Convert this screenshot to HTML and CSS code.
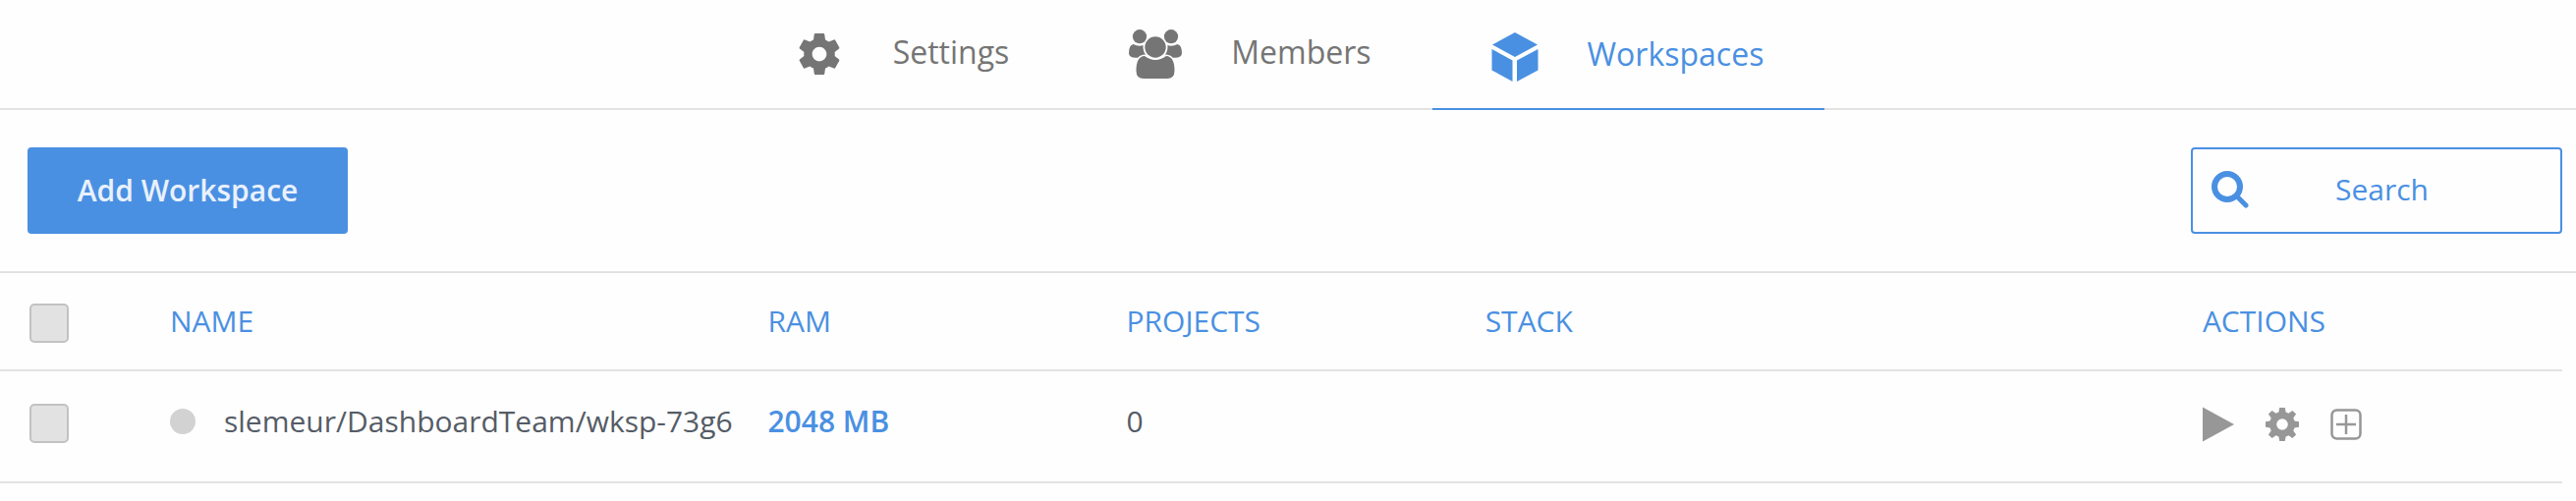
FILE: index.html
```html
<!DOCTYPE html>
<html lang="en">
<head>
<meta charset="utf-8">
<title>Workspaces</title>
<link rel="stylesheet" href="styles.css">
</head>
<body>
<nav class="tabs">
  <a class="tab" href="#settings">
    <svg class="tab-icon icon-gear" viewBox="2 2 20 20" aria-hidden="true"><path d="M19.430 12.980c.04-.32.07-.64.07-.98s-.03-.66-.07-.98l2.110-1.650c.19-.15.24-.42.12-.64l-2-3.460c-.12-.22-.39-.3-.61-.22l-2.490 1c-.52-.4-1.080-.73-1.690-.98l-.38-2.650C14.460 2.180 14.250 2 14 2h-4c-.25 0-.46.18-.49.42l-.38 2.650c-.61.25-1.170.59-1.690.98l-2.490-1c-.23-.09-.49 0-.61.22l-2 3.460c-.13.22-.07.49.12.64l2.110 1.650c-.04.32-.07.65-.07.98s.03.66.07.98l-2.110 1.650c-.19.15-.24.42-.12.64l2 3.460c.12.22.39.3.61.22l2.490-1c.52.4 1.080.73 1.690.98l.38 2.650c.03.24.24.42.49.42h4c.25 0 .46-.18.49-.42l.38-2.650c.61-.25 1.170-.59 1.690-.98l2.490 1c.23.09.49 0 .61-.22l2-3.460c.12-.22.07-.49-.12-.64l-2.110-1.650zM12 15.500c-1.930 0-3.500-1.570-3.500-3.500s1.570-3.500 3.500-3.500 3.500 1.570 3.500 3.500-1.570 3.500-3.500 3.500z"/></svg>
    <span>Settings</span>
  </a>
  <a class="tab" href="#members">
    <svg class="tab-icon icon-members" viewBox="0 0 54 50" aria-hidden="true"><path d="M4.500 15q6.500 3.500 13 0V28.800H7Q0 28.800 0 24q0-8 4.500-9zM49.500 15q-6.500 3.500-13 0V28.800H47q7 0 7-4.800q0-8-4.500-9z"/><path class="cutout" d="M16 27q11 8 22 0Q46.500 27.500 46.500 42q0 8-7.500 8H15q-7.500 0-7.500-8q0-14.500 8.500-15z"/><circle class="cutout" cx="27" cy="18" r="12.500"/><circle cx="11" cy="7.200" r="7.100"/><circle cx="43" cy="7.200" r="7.100"/><circle cx="27" cy="18" r="10.700"/></svg>
    <span>Members</span>
  </a>
  <a class="tab tab-active" href="#workspaces" aria-current="page">
    <svg class="tab-icon icon-cube" viewBox="0 0 48 50" aria-hidden="true"><path d="M24 0l23 12.500L24 25 1 12.500zM.500 17L21.500 28.500V50L.500 38.500zM47.500 17L26 28.500V50l21.500-11.500z"/></svg>
    <span>Workspaces</span>
  </a>
</nav>
<div class="toolbar">
  <button class="add-button" type="button">Add Workspace</button>
  <label class="search">
    <svg class="search-icon" viewBox="0 0 38 38" aria-hidden="true"><circle cx="16" cy="16" r="13" fill="none" stroke="currentColor" stroke-width="6"/><path d="M26 26l9 9" stroke="currentColor" stroke-width="5" stroke-linecap="round"/></svg>
    <input class="search-input" type="text" placeholder="Search" aria-label="Search">
  </label>
</div>
<div class="list">
  <table class="workspaces">
    <colgroup><col class="col-check"><col class="col-name"><col class="col-mid"><col class="col-mid"><col class="col-stack"><col></colgroup>
    <thead>
      <tr>
        <th><input class="check" type="checkbox" aria-label="Select all workspaces"></th>
        <th>NAME</th><th>RAM</th><th>PROJECTS</th><th>STACK</th><th>ACTIONS</th>
      </tr>
    </thead>
    <tbody>
      <tr>
        <td><input class="check" type="checkbox" aria-label="Select slemeur/DashboardTeam/wksp-73g6"></td>
        <td><div class="name"><span class="status"></span><span>slemeur/DashboardTeam/wksp-73g6</span></div></td>
        <td class="ram">2048 MB</td>
        <td>0</td>
        <td></td>
        <td>
          <div class="actions">
            <button class="action" type="button" aria-label="Run"><svg class="icon-play" viewBox="0 0 32 36" aria-hidden="true"><path d="M0 .500L32 18 0 35.500z"/></svg></button>
            <button class="action" type="button" aria-label="Configure"><svg class="icon-cog" viewBox="0 0 34 34" aria-hidden="true"><path fill-rule="evenodd" d="M14.200 0h5.600l.8 4.500 2.800 1.200 4-2.800 3.700 3.700-2.800 4 1.200 2.800 4.500.8v5.600l-4.500.8-1.200 2.800 2.800 4-3.700 3.700-4-2.800-2.800 1.200-.8 4.500h-5.600l-.8-4.500-2.800-1.200-4 2.800-3.700-3.700 2.800-4-1.200-2.800L0 19.800v-5.600l4.500-.8 1.200-2.800-2.800-4 3.700-3.700 4 2.800 2.800-1.200zM17 11.200a5.800 5.800 0 1 0 0 11.600a5.800 5.800 0 1 0 0-11.600z"/></svg></button>
            <button class="action" type="button" aria-label="Add"><svg class="icon-plus" viewBox="0 0 32 32" aria-hidden="true"><rect x="1.500" y="1.500" width="29" height="29" rx="5"/><path d="M6 16h20M16 6v20"/></svg></button>
          </div>
        </td>
      </tr>
    </tbody>
  </table>
</div>
</body>
</html>
```
FILE: styles.css
```css
* {
  box-sizing: border-box;
}

body {
  margin: 0;
  background: #fefefe;
  color: #555c66;
  font-family: "Open Sans", "Noto Sans", sans-serif;
  font-size: 30px;
  line-height: 40px;
}

svg {
  display: block;
  fill: currentColor;
}

.tabs {
  display: flex;
  justify-content: center;
  height: 112px;
  padding-right: 12px;
  border-bottom: 2px solid #e2e2e2;
}

.tab {
  display: flex;
  align-items: center;
  height: 112px;
  padding: 0 62px 7px 60px;
  color: #757575;
  font-size: 32px;
  text-decoration: none;
}

.tab-active {
  padding-bottom: 0;
  border-bottom: 2px solid #4a90e2;
  color: #4a90e2;
}

.tab-icon {
  flex: none;
  margin-top: 5px;
  margin-right: 50px;
}

.icon-gear {
  width: 42px;
  height: 42px;
  margin-right: 54px;
}

.icon-members {
  width: 54px;
  height: 50px;
}

.cutout {
  stroke: #fefefe;
  stroke-width: 3;
  paint-order: stroke;
}

circle.cutout {
  fill: #fefefe;
  stroke: none;
}

.icon-cube {
  width: 48px;
  height: 50px;
}

.toolbar {
  display: flex;
  justify-content: space-between;
  padding: 38px 14px 38px 28px;
}

.add-button {
  width: 326px;
  height: 88px;
  border: 0;
  border-radius: 4px;
  background: #4a90e2;
  color: #e9f1fc;
  font: 600 30px/40px "Open Sans", "Noto Sans", sans-serif;
}

.search {
  display: flex;
  align-items: center;
  width: 378px;
  height: 88px;
  padding: 0 20px 3px 19px;
  border: 2px solid #4a90e2;
  border-radius: 4px;
  color: #4a90e2;
}

.search-icon {
  flex: none;
  width: 38px;
  height: 38px;
}

.search-input {
  flex: 1;
  min-width: 0;
  height: 60px;
  padding: 0 26px 0 0;
  border: 0;
  outline: 0;
  background: transparent;
  color: inherit;
  font: 400 30px/40px "Open Sans", "Noto Sans", sans-serif;
  text-align: center;
}

.search-input::placeholder {
  color: #4a90e2;
  opacity: 1;
}

.list {
  padding-right: 14px;
  border-top: 2px solid #e2e2e2;
}

.workspaces {
  width: 100%;
  border-spacing: 0;
  table-layout: fixed;
}

.col-check {
  width: 173px;
}

.col-name {
  width: 23.33%;
}

.col-mid {
  width: 14%;
}

.col-stack {
  width: 28%;
}

.workspaces th,
.workspaces td {
  height: 114px;
  padding: 0 0 10px;
  border-bottom: 2px solid #e2e2e2;
  text-align: left;
  white-space: nowrap;
}

.workspaces th {
  height: 100px;
  padding: 0;
  color: #4a90e2;
  font-weight: 400;
}

.workspaces .ram {
  color: #4a90e2;
  font-weight: 600;
}

.check {
  display: block;
  width: 40px;
  height: 40px;
  margin: 4px 0 0 30px;
  border: 2px solid #c2c2c2;
  border-radius: 5px;
  background: #e2e2e2;
  appearance: none;
}

.name {
  display: flex;
  align-items: center;
  gap: 29px;
}

.status {
  width: 26px;
  height: 26px;
  border-radius: 50%;
  background: #d2d2d2;
}

.actions {
  display: flex;
  align-items: center;
  gap: 32px;
  padding-top: 5px;
}

.action {
  padding: 0;
  border: 0;
  background: transparent;
  color: #979797;
}

.icon-play {
  width: 32px;
  height: 36px;
}

.icon-cog {
  width: 34px;
  height: 34px;
}

.icon-plus {
  width: 32px;
  height: 32px;
  fill: none;
  stroke: currentColor;
  stroke-width: 2.500;
}
```
